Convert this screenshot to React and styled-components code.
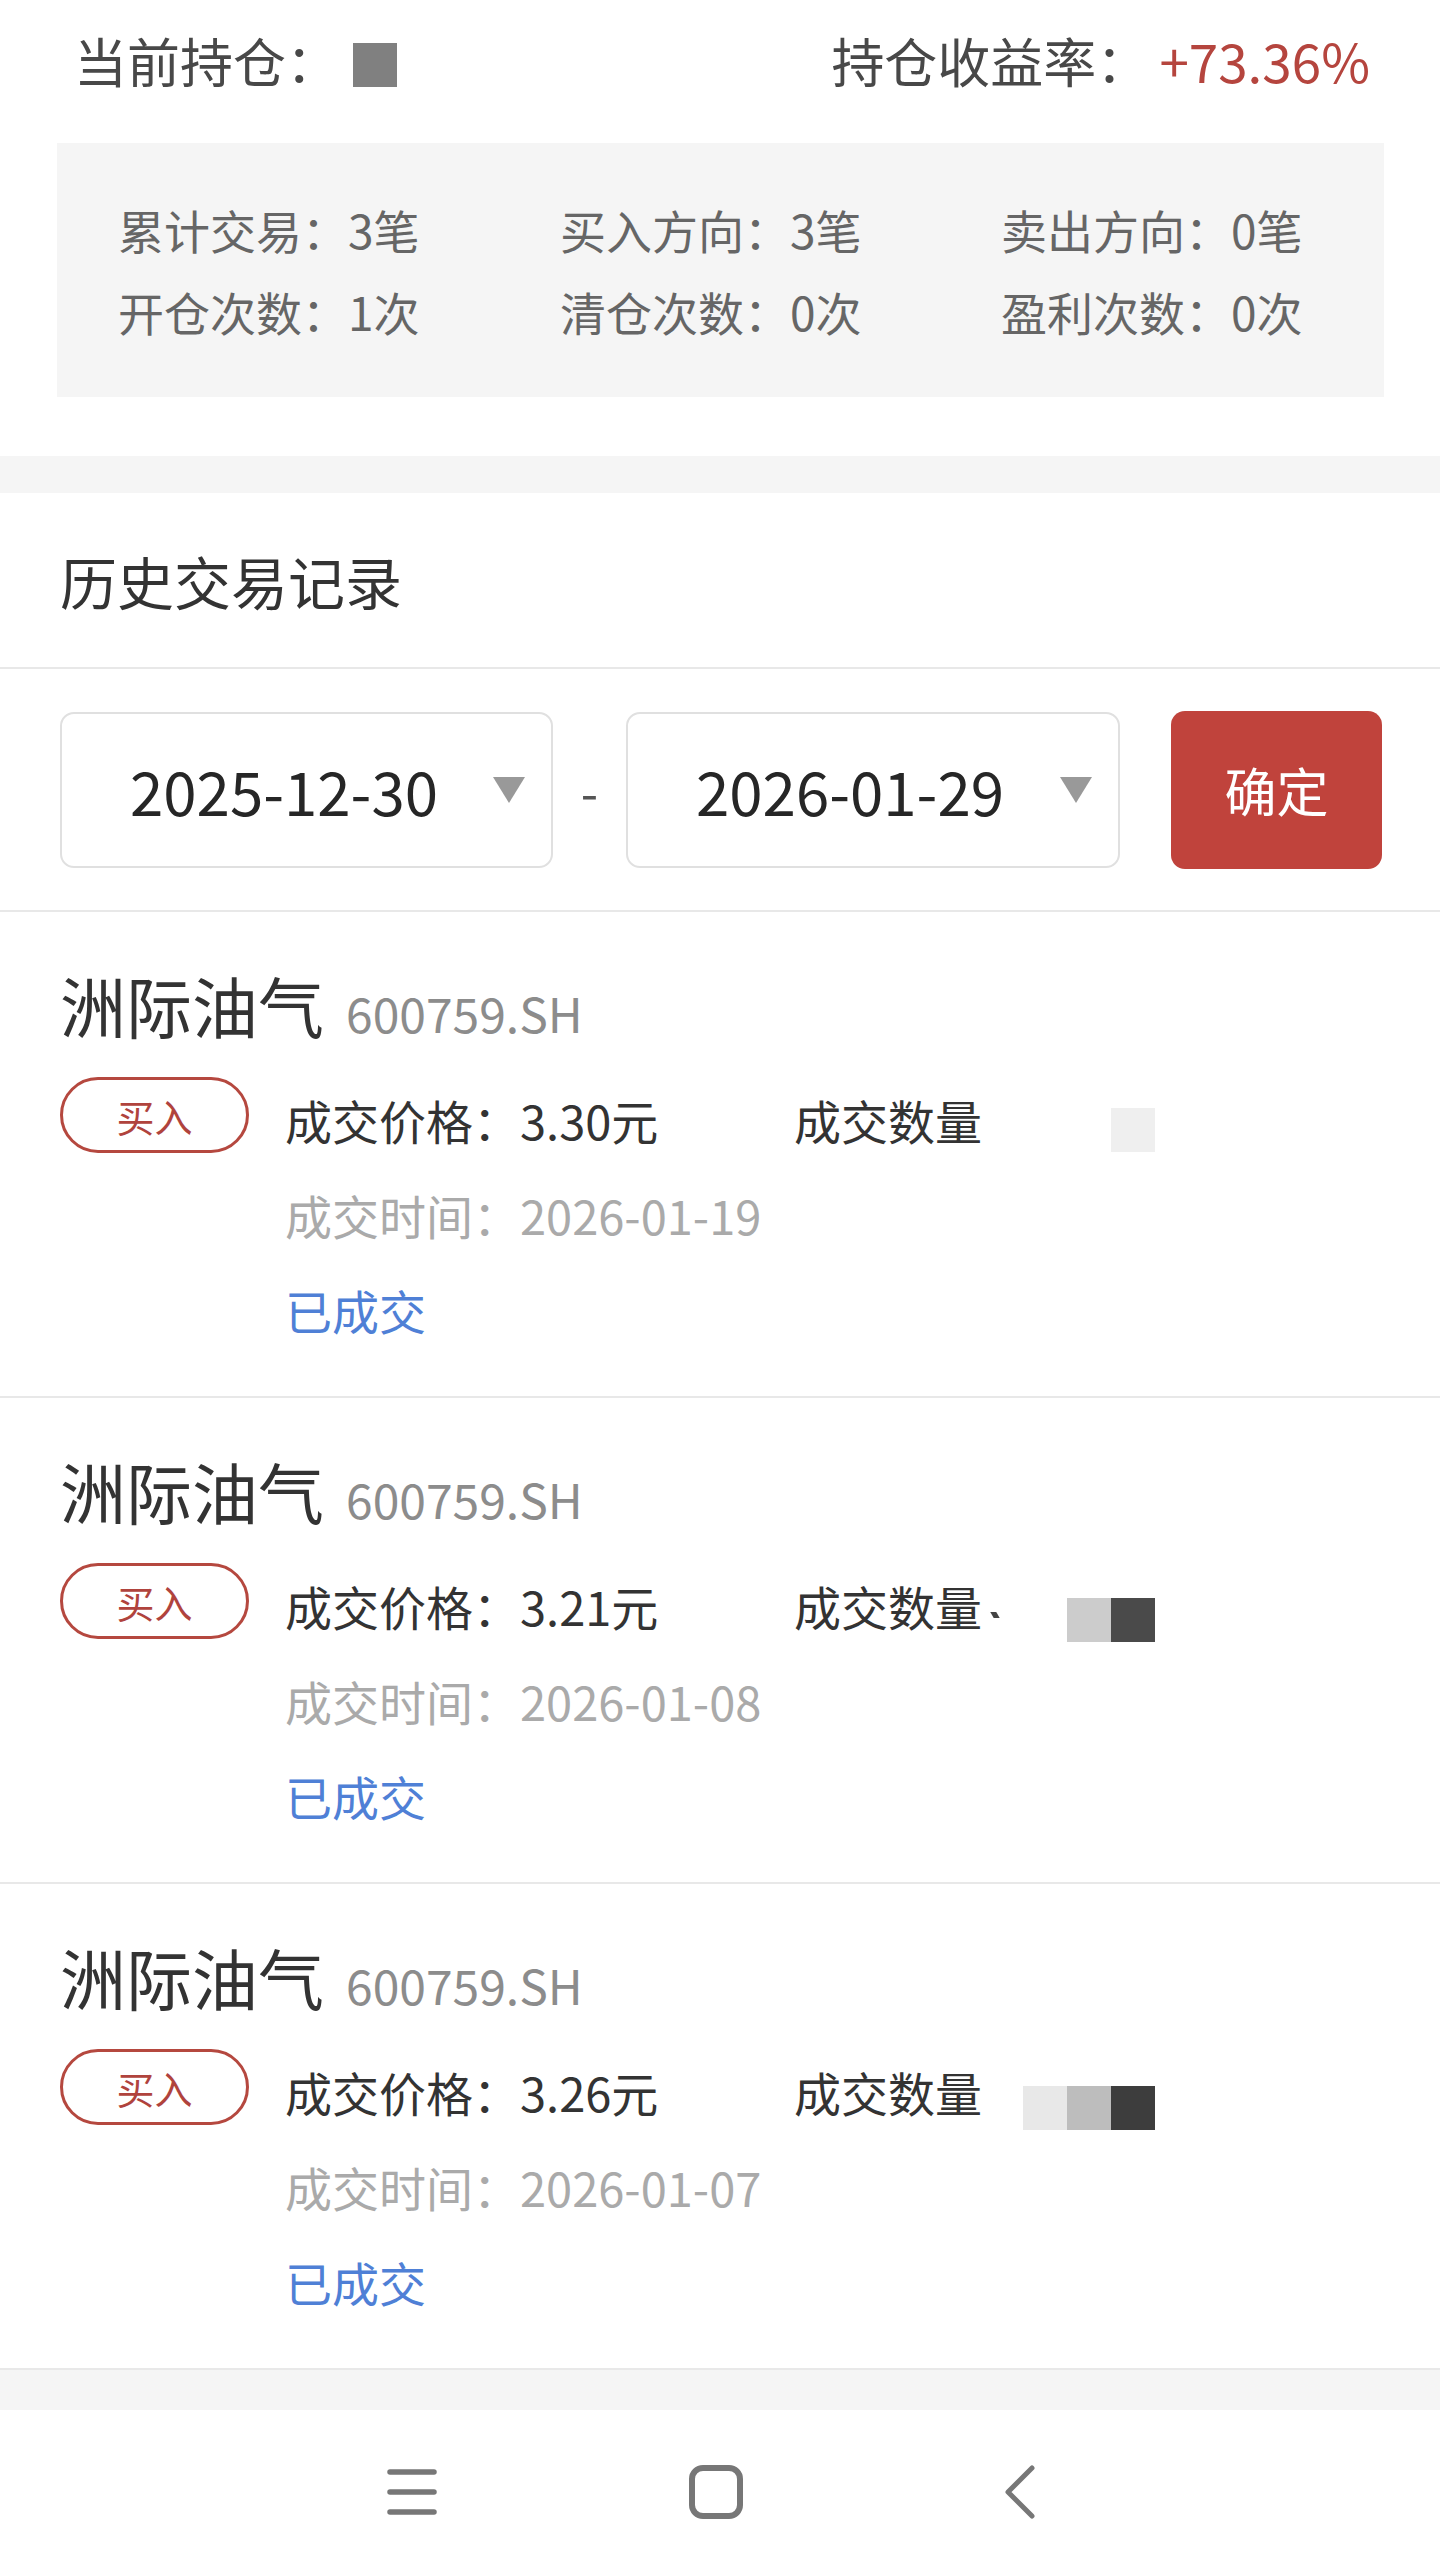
import React from "react";
import styled, { createGlobalStyle } from "styled-components";

const Global = createGlobalStyle`
  html, body { margin: 0; padding: 0; background: #ffffff; }
  body { font-family: "Noto Sans CJK SC", "Noto Sans", sans-serif; color: #333; }
  * { box-sizing: border-box; }
`;

const Page = styled.div`
  width: 1440px;
  min-height: 2576px;
  background: #fff;
  display: flex;
  flex-direction: column;
`;

const Header = styled.section`
  padding-bottom: 59px;
`;

const TopRow = styled.div`
  height: 143px;
  padding: 20px 70px 0 74px;
  display: flex;
  justify-content: space-between;
  align-items: flex-start;
  font-size: 53px;
  line-height: 80px;
  color: #484848;
`;

const Group = styled.div`
  display: flex;
  align-items: center;
`;

const Mask = styled.span`
  display: inline-block;
  flex-shrink: 0;
  width: 44px;
  height: 44px;
  background: ${(p) => p.$c};
`;

const HoldMask = styled(Mask)`
  margin-left: 14px;
  margin-top: 10px;
`;

const Rate = styled.span`
  color: #b5453e;
  margin-left: 10px;
`;

const StatsBox = styled.div`
  margin: 0 56px 0 57px;
  height: 254px;
  background: #f5f5f5;
  padding: 45px 0 45px 61px;
  display: grid;
  grid-template-columns: 442px 441px 1fr;
  font-size: 46px;
  line-height: 82px;
  color: #666;
`;

const Band = styled.div`
  height: ${(p) => p.$h}px;
  background: #f5f5f5;
`;

const TitleRow = styled.div`
  height: 176px;
  padding-left: 60px;
  display: flex;
  align-items: center;
  font-size: 57px;
  color: #333;
  border-bottom: 2px solid #e8e8e8;
`;

const FilterRow = styled.div`
  height: 243px;
  padding: 0 58px 0 60px;
  display: flex;
  align-items: center;
  border-bottom: 2px solid #e8e8e8;
`;

const DateBox = styled.div`
  width: ${(p) => p.$w}px;
  height: 156px;
  border: 2px solid #e0e0e0;
  border-radius: 14px;
  display: flex;
  align-items: center;
  justify-content: space-between;
  padding: 0 26px 0 68px;
  font-size: 60px;
  color: #262626;
`;

const Caret = styled.span`
  width: 0;
  height: 0;
  border-left: 16px solid transparent;
  border-right: 16px solid transparent;
  border-top: 26px solid #999;
`;

const Dash = styled.div`
  width: 73px;
  text-align: center;
  font-size: 50px;
  color: #555;
`;

const ConfirmButton = styled.button`
  margin-left: 51px;
  width: 211px;
  height: 158px;
  border: none;
  border-radius: 14px;
  background: #c0433c;
  color: #fff;
  font-family: inherit;
  font-size: 52px;
  padding: 0;
`;

const Card = styled.div`
  height: 486px;
  padding: 52px 0 0 60px;
  border-bottom: 2px solid #e8e8e8;
`;

const CardTitle = styled.div`
  height: 80px;
  display: flex;
  align-items: baseline;
  line-height: 80px;
`;

const StockName = styled.span`
  font-size: 66px;
  color: #333;
`;

const StockCode = styled.span`
  font-size: 48px;
  color: #8c8c8c;
  margin-left: 22px;
`;

const CardBody = styled.div`
  margin-top: 28px;
  display: flex;
  align-items: flex-start;
`;

const Tag = styled.span`
  margin-top: 5px;
  flex-shrink: 0;
  width: 189px;
  height: 76px;
  border: 3px solid #b5483f;
  border-radius: 40px;
  display: flex;
  align-items: center;
  justify-content: center;
  font-size: 38px;
  color: #b0433d;
`;

const Lines = styled.div`
  margin-left: 36px;
  display: flex;
  flex-direction: column;
  font-size: 47px;
  line-height: 95px;
  white-space: nowrap;
`;

const PriceLine = styled.div`
  display: flex;
  align-items: flex-start;
  color: #333;
`;

const PriceCell = styled.span`
  width: 509px;
  flex-shrink: 0;
`;

const QtyLabel = styled.span`
  flex-shrink: 0;
  width: 192px;
  position: relative;
`;

const Tick = styled.span`
  position: absolute;
  left: 198px;
  top: 54px;
  width: 6px;
  height: 6px;
  background: #444;
  transform: skew(30deg);
`;

const QtyMask = styled.span`
  width: 169px;
  flex-shrink: 0;
  margin-top: ${(p) => p.$top}px;
  display: flex;
  justify-content: flex-end;
`;

const TimeLine = styled.div`
  color: #aaa;
`;

const StatusLine = styled.div`
  color: #4f80d6;
`;

const NavBar = styled.nav`
  flex: 1;
  min-height: 166px;
  display: flex;
  justify-content: center;
  align-items: center;
  padding-right: 8px;
  padding-bottom: 2px;
`;

const NavItem = styled.div`
  width: 304px;
  display: flex;
  justify-content: center;
`;

const stats = [
  "累计交易：3笔",
  "买入方向：3笔",
  "卖出方向：0笔",
  "开仓次数：1次",
  "清仓次数：0次",
  "盈利次数：0次",
];

const trades = [
  { price: "3.30", time: "2026-01-19", masks: ["#efefef"], tick: false, top: 36 },
  { price: "3.21", time: "2026-01-08", masks: ["#cccccc", "#4a4a4a"], tick: true, top: 40 },
  { price: "3.26", time: "2026-01-07", masks: ["#e8e8e8", "#bdbdbd", "#3d3d3d"], tick: false, top: 42 },
];

export default function App() {
  return (
    <Page>
      <Global />
      <Header>
        <TopRow>
          <Group>
            <span>当前持仓：</span>
            <HoldMask $c="#808080" />
          </Group>
          <Group>
            <span>持仓收益率：</span>
            <Rate>+73.36%</Rate>
          </Group>
        </TopRow>
        <StatsBox>
          {stats.map((s) => (
            <div key={s}>{s}</div>
          ))}
        </StatsBox>
      </Header>
      <Band $h={37} />
      <TitleRow>历史交易记录</TitleRow>
      <FilterRow>
        <DateBox $w={493}>
          <span>2025-12-30</span>
          <Caret />
        </DateBox>
        <Dash>-</Dash>
        <DateBox $w={494}>
          <span>2026-01-29</span>
          <Caret />
        </DateBox>
        <ConfirmButton>确定</ConfirmButton>
      </FilterRow>
      {trades.map((t) => (
        <Card key={t.time}>
          <CardTitle>
            <StockName>洲际油气</StockName>
            <StockCode>600759.SH</StockCode>
          </CardTitle>
          <CardBody>
            <Tag>买入</Tag>
            <Lines>
              <PriceLine>
                <PriceCell>成交价格：{t.price}元</PriceCell>
                <QtyLabel>
                  成交数量
                  {t.tick && <Tick />}
                </QtyLabel>
                <QtyMask $top={t.top}>
                  {t.masks.map((c, i) => (
                    <Mask key={i} $c={c} />
                  ))}
                </QtyMask>
              </PriceLine>
              <TimeLine>成交时间：{t.time}</TimeLine>
              <StatusLine>已成交</StatusLine>
            </Lines>
          </CardBody>
        </Card>
      ))}
      <Band $h={40} />
      <NavBar>
        <NavItem>
          <svg width="52" height="52" viewBox="0 0 52 52" fill="none" stroke="#777" strokeWidth="5.5" strokeLinecap="round">
            <line x1="4" y1="6" x2="48" y2="6" />
            <line x1="4" y1="26" x2="48" y2="26" />
            <line x1="4" y1="46" x2="48" y2="46" />
          </svg>
        </NavItem>
        <NavItem>
          <svg width="56" height="54" viewBox="0 0 56 54" fill="none" stroke="#777" strokeWidth="6">
            <rect x="4" y="3" width="48" height="48" rx="11" />
          </svg>
        </NavItem>
        <NavItem>
          <svg width="40" height="54" viewBox="0 0 40 54" fill="none" stroke="#777" strokeWidth="5" strokeLinecap="round" strokeLinejoin="round">
            <polyline points="32,3 8,27 32,51" />
          </svg>
        </NavItem>
      </NavBar>
    </Page>
  );
}
